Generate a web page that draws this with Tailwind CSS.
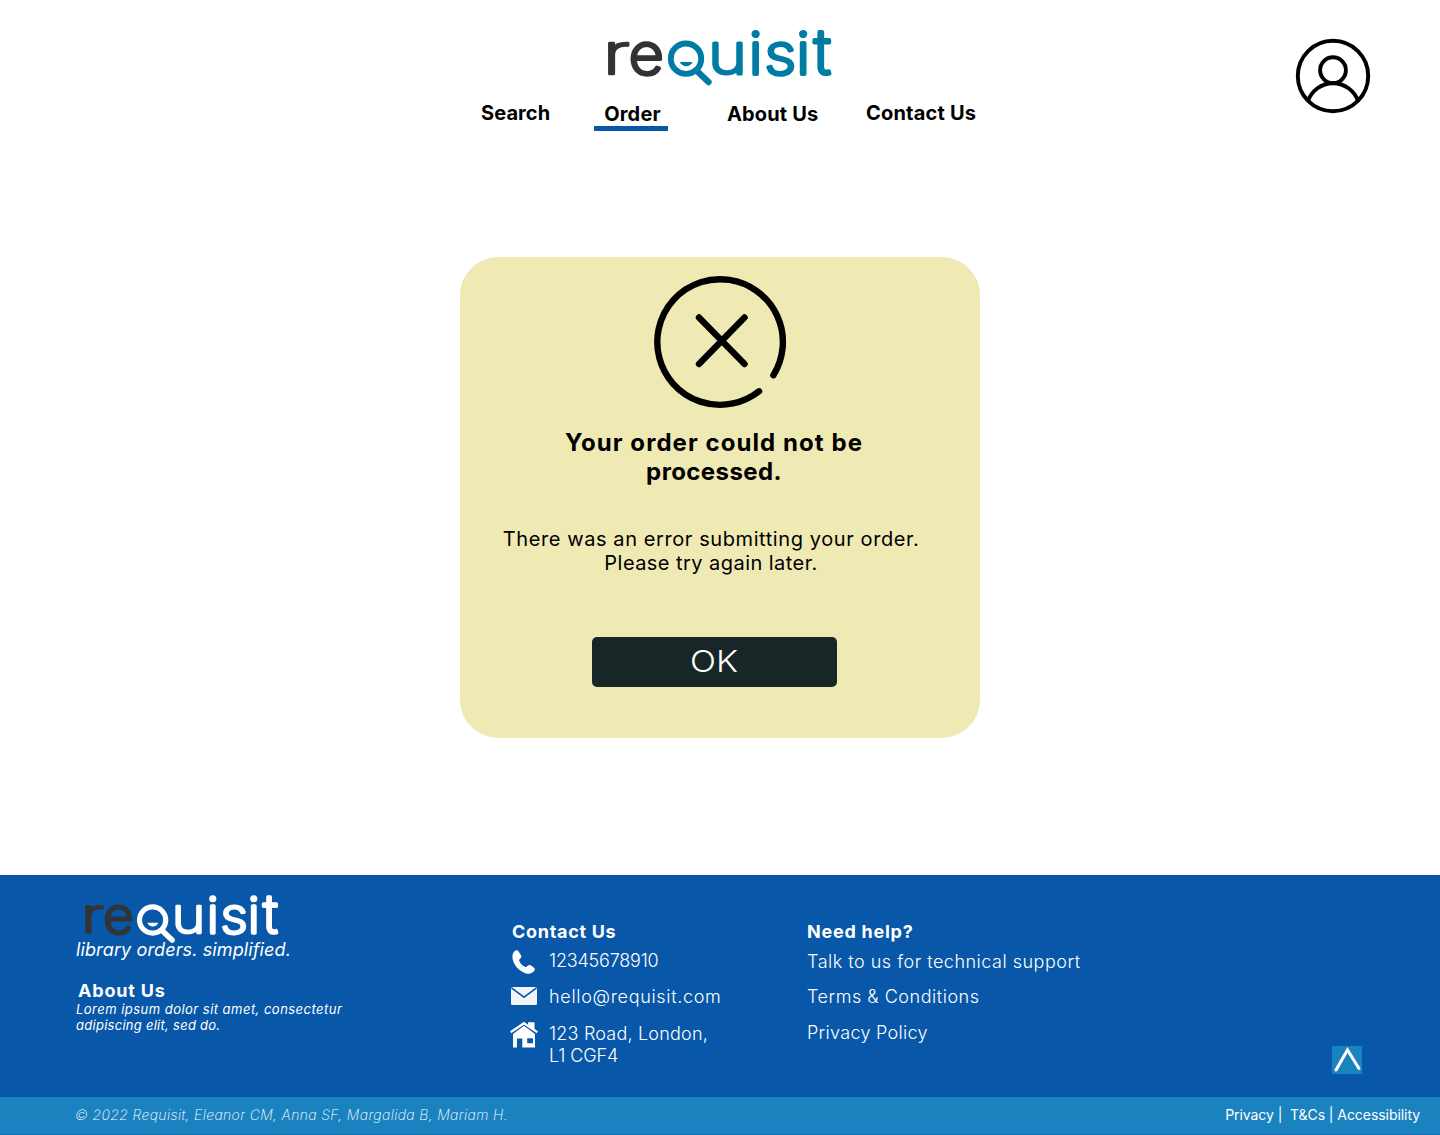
<!DOCTYPE html>
<html lang="en">
<head>
<meta charset="utf-8">
<title>Requisit – Order</title>
<script src="https://cdn.jsdelivr.net/npm/@tailwindcss/browser@4"></script>
</head>
<body class="flex h-[1135px] w-[1440px] flex-col overflow-hidden bg-white font-['Inter',sans-serif] text-black">

<header class="grid h-[257px] shrink-0 grid-cols-[1fr_auto_1fr] items-start">
  <span></span>
  <div class="flex w-[520px] flex-col">
    <svg class="mt-6 ml-[140px] h-[66px] w-[240px] overflow-visible" viewBox="0 0 240 66" role="img" aria-label="requisit">
      <g font-family="Inter, sans-serif" font-size="57" font-weight="200" stroke-width="3.400" stroke-linejoin="round" text-anchor="middle">
        <g fill="#333" stroke="#333"><text x="16.300" y="50.300" textLength="27" lengthAdjust="spacingAndGlyphs" stroke-width="2.600">r</text><text x="46.300" y="50.300" textLength="35" lengthAdjust="spacingAndGlyphs">e</text></g>
        <g fill="#007ba4" stroke="#007ba4"><text x="127.500" y="50.300" textLength="39" lengthAdjust="spacingAndGlyphs" stroke-width="3">u</text><text x="155.600" y="49.800" stroke-width="4.200">i</text><text x="180.300" y="50.300" textLength="32" lengthAdjust="spacingAndGlyphs">s</text><text x="203.200" y="49.800" stroke-width="4.200">i</text><text x="222.300" y="50" font-size="62" stroke-width="4">t</text></g>
      </g>
      <g fill="none" stroke="#007ba4"><circle cx="86" cy="34.700" r="15.200" stroke-width="5.900"/><path d="M97.500 47.500 108.500 58" stroke-width="6.400" stroke-linecap="round"/></g>
      <path d="M79.700 38h13c-1.200 2.700-3.600 4.200-6.500 4.200s-5.300-1.500-6.500-4.200z" fill="#007ba4"/>
    </svg>
    <nav class="mt-[11px] flex items-start text-[20px] leading-6 font-bold whitespace-nowrap">
      <a class="ml-[21px] w-[113px] tracking-[0.1px]">Search</a>
      <a class="mt-px flex h-[29px] w-[74px] justify-center border-b-5 border-[#0857a9] pl-[3px] tracking-[0.2px]">Order</a>
      <a class="mt-px ml-[59px] w-[139px] tracking-[0.15px]">About Us</a>
      <a class="tracking-[0.2px]">Contact Us</a>
    </nav>
  </div>
  <svg class="mt-[38px] mr-[69px] size-[76px] justify-self-end" viewBox="0 0 76 76" fill="none" stroke="#000" stroke-width="3.900">
    <circle cx="38" cy="38" r="35.200"/><circle cx="38" cy="32.200" r="12.900"/><path d="M12.800 63.500a26.500 26.500 0 0 1 50.400 0"/>
  </svg>
</header>

<main class="flex h-[618px] shrink-0 justify-center">
  <section class="flex h-[481px] w-[520px] flex-col items-center rounded-[38px] bg-[#efe9b3]">
    <svg class="mt-[17px] size-[136px] shrink-0" viewBox="0 0 136 136" fill="none" stroke="#000" stroke-width="6.400" stroke-linecap="round">
      <path d="M107 117.300A62.800 62.800 0 1 1 121.400 101.200"/><path d="M47 43.500 92.500 90M92.500 43.500 47 90"/>
    </svg>
    <h1 class="mt-[18px] mr-[12px] flex flex-col items-center text-[24px] leading-[29px] font-bold whitespace-nowrap">
      <span class="tracking-[1.07px]">Your order could not be</span><span class="tracking-[0.4px]">processed.</span>
    </h1>
    <p class="mt-[41px] mr-[18px] flex flex-col items-center text-[20px] leading-6 whitespace-nowrap">
      <span class="tracking-[0.59px]">There was an error submitting your order.</span><span class="tracking-[0.45px]">Please try again later.</span>
    </p>
    <button class="mt-[62px] mr-[11px] flex h-[50px] w-[245px] items-center justify-center rounded-[5px] bg-[#182628] pb-px text-[30px] font-light text-white"><span class="scale-x-[1.14]">OK</span></button>
  </section>
</main>

<footer class="flex h-[222px] shrink-0 items-start bg-[#0857a9] text-[18px] leading-[22px] whitespace-nowrap text-white">
  <div class="ml-[76px] flex w-[434px] flex-col">
    <svg class="mt-[15px] ml-[2px] h-[57px] w-[208px] overflow-visible" viewBox="0 0 240 66" role="img" aria-label="requisit">
      <g font-family="Inter, sans-serif" font-size="57" font-weight="200" stroke-width="3.400" stroke-linejoin="round" text-anchor="middle">
        <g fill="#333" stroke="#333"><text x="16.300" y="50.300" textLength="27" lengthAdjust="spacingAndGlyphs" stroke-width="2.600">r</text><text x="46.300" y="50.300" textLength="35" lengthAdjust="spacingAndGlyphs">e</text></g>
        <g fill="#fff" stroke="#fff"><text x="127.500" y="50.300" textLength="39" lengthAdjust="spacingAndGlyphs" stroke-width="3">u</text><text x="155.600" y="49.800" stroke-width="4.200">i</text><text x="180.300" y="50.300" textLength="32" lengthAdjust="spacingAndGlyphs">s</text><text x="203.200" y="49.800" stroke-width="4.200">i</text><text x="222.300" y="50" font-size="62" stroke-width="4">t</text></g>
      </g>
      <g fill="none" stroke="#fff"><circle cx="86" cy="34.700" r="15.200" stroke-width="5.900"/><path d="M97.500 47.500 108.500 58" stroke-width="6.400" stroke-linecap="round"/></g>
      <path d="M79.700 38h13c-1.200 2.700-3.600 4.200-6.500 4.200s-5.300-1.500-6.500-4.200z" fill="#fff"/>
    </svg>
    <p class="-mt-[8px] tracking-[0.12px] italic">library orders. simplified.</p>
    <h2 class="mt-[19px] ml-[2px] font-bold tracking-[0.8px]">About Us</h2>
    <p class="-mt-px flex flex-col text-[13px] leading-4 italic"><span class="tracking-[0.47px]">Lorem ipsum dolor sit amet, consectetur</span><span class="tracking-[0.27px]">adipiscing elit, sed do.</span></p>
  </div>
  <div class="mt-[46px] w-[297px] font-light">
    <h2 class="ml-[2px] font-bold tracking-[0.7px]">Contact Us</h2>
    <ul class="mt-[7px] flex flex-col gap-[14px]">
      <li class="flex h-[22px] items-start">
        <svg class="mr-[11px] h-[24px] w-[28px]" viewBox="0 0 28 24" fill="#fff"><path d="M5.200.7C6.500-.1 7.800.3 8.600 1.500L11 5.200c.7 1.200.4 2.300-.7 3.200-1.100.9-1.500 1.500-1 2.600 1 2.600 3 4.600 5.600 5.700 1.100.5 1.600.2 2.500-.8 1-1.100 2.100-1.300 3.300-.6l3 2.100c1.200.8 1.500 2 .7 3.200-2 3-5.300 3.800-9 2.600C9.400 21 4.700 16.300 3 10.500 1.900 6.600 2.200 2.700 5.200.7Z"/></svg>
        <span class="-tracking-[0.2px]">12345678910</span>
      </li>
      <li class="flex h-[22px] items-start">
        <svg class="mt-px mr-[11px] h-[18px] w-[28px]" viewBox="0 0 28 18"><rect x="1" width="26" height="18" rx="1.500" fill="#f4f4f6"/><path d="M1.500.8 14 10.200 26.500.8" fill="none" stroke="#0857a9" stroke-width="1.600"/></svg>
        <span class="tracking-[0.68px]">hello@requisit.com</span>
      </li>
      <li class="flex items-start">
        <svg class="-mt-px mr-[11px] h-[28px] w-[28px]" viewBox="0 0 28 28" fill="#fff"><path fill-rule="evenodd" d="M3 13 14 4.500 25 13V26.500H12.300V17.500H7V26.500H3ZM17.200 17.200V22.300H23V17.200Z"/><path d="M0 10.300 14 .8l4 2.900V1.300h6.500V7.700L28 10.400 26.500 12.300 14 4 1.500 12.300Z"/><path d="M1.500 12.700 14 4.300 26.500 12.700" fill="none" stroke="#0857a9" stroke-width="1"/></svg>
        <span class="mt-px flex flex-col"><span class="tracking-[0.2px]">123 Road, London,</span><span class="-tracking-[0.1px]">L1 CGF4</span></span>
      </li>
    </ul>
  </div>
  <div class="mt-[46px] flex flex-col font-light">
    <h2 class="font-bold tracking-[0.75px]">Need help?</h2>
    <ul class="mt-2 flex flex-col gap-[14px]">
      <li class="tracking-[0.5px]">Talk to us for technical support</li>
      <li class="-mt-px tracking-[0.53px]">Terms &amp; Conditions</li>
      <li class="tracking-[0.3px]">Privacy Policy</li>
    </ul>
  </div>
  <button class="mt-[171px] mr-[78px] ml-auto h-[28px] w-[30px] bg-[#1b82c0]" aria-label="Back to top">
    <svg class="h-[28px] w-[30px]" viewBox="0 0 30 28" fill="none" stroke="#fff" stroke-width="3" stroke-linecap="round"><path d="M4 24 15.500 4 27 22.500"/></svg>
  </button>
</footer>
<div class="flex h-[38px] shrink-0 items-center justify-between border-b border-[#1272b8] bg-[#1b82c0] pr-[20px] pb-[2px] pl-[75px] text-[14px] whitespace-pre text-white">
  <p class="font-extralight tracking-[0.36px] italic">© 2022 Requisit, Eleanor CM, Anna SF, Margalida B, Mariam H.</p>
  <p class="-tracking-[0.06px]">Privacy |  T&amp;Cs | Accessibility</p>
</div>
</body>
</html>
